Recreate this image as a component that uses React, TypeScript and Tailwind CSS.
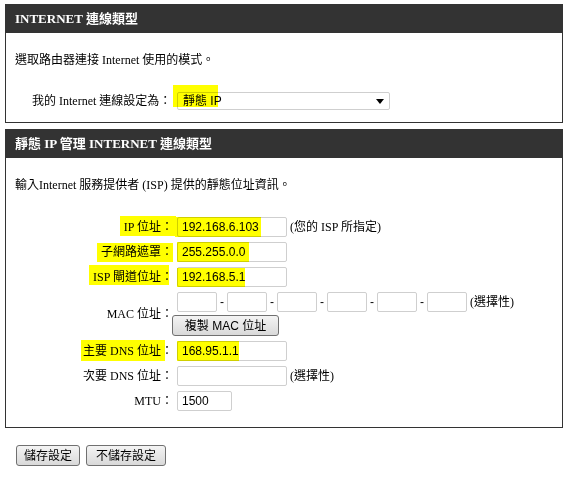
import type { ReactNode } from 'react'

const serif = "font-['Liberation_Serif','Noto_Sans_CJK_TC',serif]"
const sans = "font-['Liberation_Sans','Noto_Sans_CJK_TC',sans-serif]"

function Mark({ children, mark }: { children: ReactNode; mark: string }) {
  return (
    <span className="relative inline-block">
      {children}
      <span className={`pointer-events-none absolute bg-[#ffff00] mix-blend-multiply ${mark}`} />
    </span>
  )
}

function Field({ value = '', w = 'w-[110px]' }: { value?: string; w?: string }) {
  return (
    <input
      readOnly
      value={value}
      className={`${w} h-[20px] rounded-[2px] border border-[#cfcfcf] bg-white px-[4px] text-[12px] text-black outline-none ${sans}`}
    />
  )
}

function Header({ children }: { children: ReactNode }) {
  return (
    <div className={`flex h-[29px] items-center bg-[#333333] pl-[10px] text-[13px] font-bold text-white ${serif}`}>
      {children}
    </div>
  )
}

function Row({ label, children }: { label: ReactNode; children: ReactNode }) {
  return (
    <div className="flex items-center">
      <div className="w-[167px] shrink-0 whitespace-nowrap text-right">{label}</div>
      <div className="ml-[4px] flex items-center">{children}</div>
    </div>
  )
}

function Btn({ children, w }: { children: ReactNode; w: string }) {
  return (
    <button
      className={`${w} h-[21px] rounded-[3px] border border-[#707070] bg-[linear-gradient(#f4f4f4,#d9d9d9)] text-[12px] text-black ${sans}`}
    >
      {children}
    </button>
  )
}

export default function App() {
  const mac = [0, 1, 2, 3, 4, 5]
  return (
    <div className={`h-[483px] w-[569px] bg-white pt-[4px] text-[12px] text-black ${serif}`}>
      <div className="mx-[5px] w-[558px]">
        <Header>INTERNET 連線類型</Header>
        <div className="border-x border-b border-[#333333] pb-[12px] pl-[9px] pt-[19px]">
          <div className="leading-[16px]">選取路由器連接 Internet 使用的模式。</div>
          <div className="mt-[24px] flex items-center pl-[17px]">
            <span className="w-[145px] shrink-0 whitespace-nowrap">我的 Internet 連線設定為：</span>
            <Mark mark="-left-[4px] -top-[7px] h-[22px] w-[45px]">
              <div
                className={`relative flex h-[18px] w-[213px] items-center rounded-[2px] border border-[#cfcfcf] bg-white pl-[5px] text-[12px] ${sans}`}
              >
                靜態 IP
                <span className="absolute right-[5px] top-[6px] h-0 w-0 border-x-[4px] border-t-[5px] border-x-transparent border-t-black" />
              </div>
            </Mark>
          </div>
        </div>
      </div>

      <div className="mx-[5px] mt-[6px] w-[558px]">
        <Header>靜態 IP 管理 INTERNET 連線類型</Header>
        <div className="border-x border-b border-[#333333] pb-[16px] pt-[19px]">
          <div className="pl-[9px] leading-[16px]">輸入Internet 服務提供者 (ISP) 提供的靜態位址資訊。</div>

          <div className="mt-[24px] flex flex-col gap-[5px]">
            <Row label={<Mark mark="-left-[4px] -top-[2px] h-[20px] w-[56px]">IP 位址：</Mark>}>
              <Mark mark="-left-[2px] top-0 h-[20px] w-[86px]">
                <Field value="192.168.6.103" />
              </Mark>
              <span className="ml-[3px]">(您的 ISP 所指定)</span>
            </Row>
            <Row label={<Mark mark="-left-[4px] top-[0px] h-[19px] w-[76px]">子網路遮罩：</Mark>}>
              <Mark mark="left-0 top-0 h-[20px] w-[72px]">
                <Field value="255.255.0.0" />
              </Mark>
            </Row>
            <Row label={<Mark mark="-left-[4px] top-[-3px] h-[20px] w-[80px]">ISP 閘道位址：</Mark>}>
              <Mark mark="left-0 top-[1px] h-[19px] w-[68px]">
                <Field value="192.168.5.1" />
              </Mark>
            </Row>
            <Row label="MAC 位址：">
              <div className="flex flex-col">
                <div className="flex items-center">
                  {mac.map((i) => (
                    <span key={i} className="flex items-center">
                      {i > 0 && <span className={`w-[10px] text-center text-[12px] ${sans}`}>-</span>}
                      <Field w="w-[40px]" />
                    </span>
                  ))}
                  <span className="ml-[3px]">(選擇性)</span>
                </div>
                <div className="mt-[3px] -ml-[5px]">
                  <Btn w="w-[107px]">複製 MAC 位址</Btn>
                </div>
              </div>
            </Row>
            <Row label={<Mark mark="-left-[2px] -top-[2px] h-[21px] w-[84px]">主要 DNS 位址：</Mark>}>
              <Mark mark="left-0 top-0 h-[20px] w-[62px]">
                <Field value="168.95.1.1" />
              </Mark>
            </Row>
            <Row label="次要 DNS 位址：">
              <Field />
              <span className="ml-[3px]">(選擇性)</span>
            </Row>
            <Row label="MTU：">
              <Field value="1500" w="w-[55px]" />
            </Row>
          </div>
        </div>
      </div>

      <div className="ml-[16px] mt-[17px] flex gap-[6px]">
        <Btn w="w-[64px]">儲存設定</Btn>
        <Btn w="w-[80px]">不儲存設定</Btn>
      </div>
    </div>
  )
}
